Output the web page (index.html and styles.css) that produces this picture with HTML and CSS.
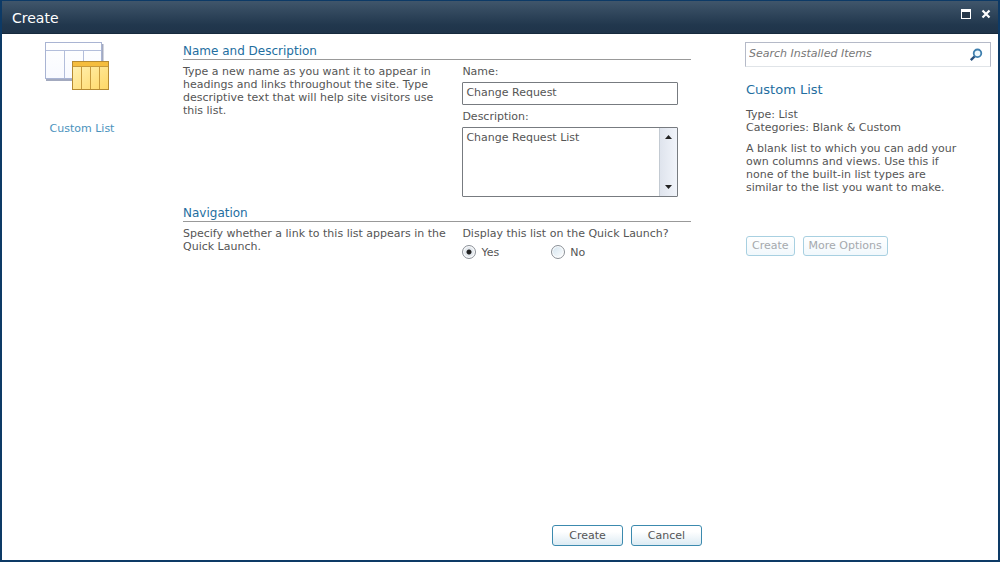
FILE: index.html
```html
<!DOCTYPE html>
<html lang="en">
<head>
<meta charset="utf-8">
<meta name="viewport" content="width=device-width, initial-scale=1">
<title>Create</title>
<link rel="stylesheet" href="styles.css">
</head>
<body>
<div class="dialog" role="dialog" aria-labelledby="dialog-title">
  <header class="titlebar">
    <h1 class="title" id="dialog-title">Create</h1>
    <button class="window-button" type="button" aria-label="Maximize">
      <svg width="12" height="12" viewBox="0 0 12 12"><rect x="1.5" y="1.5" width="9" height="9" fill="#26384a" stroke="#fff"/><rect x="1" y="1" width="10" height="3" fill="#fff"/></svg>
    </button>
    <button class="window-button" type="button" aria-label="Close">
      <svg width="12" height="12" viewBox="0 0 12 12"><path d="M2.5 2.5l7 7M9.5 2.5l-7 7" stroke="#fff" stroke-width="2.2"/></svg>
    </button>
  </header>

  <div class="content">
    <nav class="templates">
      <a class="template" href="#">
        <svg class="template-icon" width="66" height="50" viewBox="0 0 66 50">
          <defs>
            <linearGradient id="sheet" x1="0" y1="0" x2="0" y2="1"><stop offset="0" stop-color="#fff"/><stop offset="1" stop-color="#f8faff"/></linearGradient>
            <linearGradient id="gold" x1="0" y1="0" x2="1" y2="1"><stop offset="0" stop-color="#fff3b8"/><stop offset="1" stop-color="#ffd766"/></linearGradient>
          </defs>
          <path d="M2 38h56.500V2" fill="none" stroke="#a3aabf" stroke-width="2"/>
          <rect x="1.5" y="0.500" width="56" height="36" fill="url(#sheet)" stroke="#a9b4d3"/>
          <path d="M2 8.500h55M20.500 8.500V36M39.500 8.500V36" stroke="#b3bedb"/>
          <rect x="28.500" y="19.500" width="36" height="28" fill="url(#gold)" stroke="#b58a32"/>
          <rect x="29" y="20" width="35" height="4" fill="#f5bd3e"/>
          <path d="M29 24.500h35M37.500 25v22M46.500 25v22M55.500 25v22" stroke="#c79a3c"/>
        </svg>
        <span>Custom List</span>
      </a>
    </nav>

    <form class="form">
      <section class="section">
        <h2 class="section-title">Name and Description</h2>
        <div class="section-body">
          <p class="hint">Type a new name as you want it to appear in headings and links throughout the site. Type descriptive text that will help site visitors use this list.</p>
          <div class="fields">
            <label for="name">Name:</label>
            <input class="text-input" id="name" type="text" value="Change Request">
            <label for="description">Description:</label>
            <div class="memo">
              <textarea class="memo-text" id="description">Change Request List</textarea>
              <div class="memo-scroll">
                <button class="scroll-button" type="button" aria-label="Scroll up"><svg width="7" height="4" viewBox="0 0 7 4"><path d="M0 4L3.500 0 7 4z" fill="#222"/></svg></button>
                <button class="scroll-button" type="button" aria-label="Scroll down"><svg width="7" height="4" viewBox="0 0 7 4"><path d="M0 0h7L3.500 4z" fill="#222"/></svg></button>
              </div>
            </div>
          </div>
        </div>
      </section>

      <section class="section">
        <h2 class="section-title">Navigation</h2>
        <div class="section-body">
          <p class="hint">Specify whether a link to this list appears in the Quick Launch.</p>
          <fieldset class="choices">
            <legend>Display this list on the Quick Launch?</legend>
            <div class="options">
              <label class="option"><input class="radio" type="radio" name="quick-launch" checked>Yes</label>
              <label class="option"><input class="radio" type="radio" name="quick-launch">No</label>
            </div>
          </fieldset>
        </div>
      </section>

      <footer class="actions">
        <button class="button button-wide" type="submit">Create</button>
        <button class="button button-wide" type="button">Cancel</button>
      </footer>
    </form>

    <aside class="details">
      <div class="search">
        <input class="search-input" type="text" placeholder="Search Installed Items" aria-label="Search Installed Items">
        <button class="search-button" type="button" aria-label="Search">
          <svg width="14" height="14" viewBox="0 0 14 14"><path d="M6 8L1.800 12.200" stroke="#264f7d" stroke-width="2.400"/><circle cx="8.500" cy="5.300" r="3.800" fill="#eef8fd" stroke="#3f7fae" stroke-width="1.800"/></svg>
        </button>
      </div>
      <div class="summary">
        <h2 class="summary-title">Custom List</h2>
        <p>Type: List<br>Categories: Blank &amp; Custom</p>
        <p class="summary-text">A blank list to which you can add your own columns and views. Use this if none of the built-in list types are similar to the list you want to make.</p>
        <div class="summary-actions">
          <button class="button" type="button" disabled>Create</button>
          <button class="button" type="button" disabled>More Options</button>
        </div>
      </div>
    </aside>
  </div>
</div>
</body>
</html>
```
FILE: styles.css
```css
* {
  box-sizing: border-box;
}

body {
  margin: 0;
  font: 11px/13px Verdana, "DejaVu Sans", sans-serif;
  color: #555;
}

h1, h2, p, fieldset, legend {
  margin: 0;
  padding: 0;
  border: 0;
  font-weight: normal;
}

button, input, textarea {
  margin: 0;
  font: inherit;
  color: inherit;
}

.dialog {
  display: flex;
  flex-direction: column;
  min-height: 100vh;
  border: 2px solid #0d3a66;
  border-top-width: 1px;
  background: #fff;
}

.titlebar {
  display: flex;
  align-items: center;
  gap: 8px;
  height: 33px;
  padding: 0 6px 0 10px;
  border-bottom: 1px solid #162a3d;
  background: linear-gradient(#40566b, #21374d 75%, #1f344a);
}

.title {
  flex: 1;
  padding-top: 1px;
  font-size: 14px;
  line-height: 16px;
  color: #fff;
}

.window-button {
  display: flex;
  margin-bottom: 6px;
  padding: 0;
  border: 0;
  background: none;
}

.content {
  flex: 1;
  display: flex;
  padding: 8px 7px 14px 0;
}

.templates {
  flex: none;
  width: 160px;
  margin-right: 21px;
}

.template {
  display: flex;
  flex-direction: column;
  align-items: center;
  gap: 30px;
  color: #4b93bd;
  text-decoration: none;
}

.template-icon {
  margin-right: 10px;
}

.form {
  flex: 1;
  display: flex;
  flex-direction: column;
  min-width: 0;
  margin-right: 43px;
}

.section {
  margin: 0 11px 7px 0;
}

.section-title {
  padding-top: 2px;
  border-bottom: 1px solid #999;
  font-size: 12px;
  line-height: 15px;
  color: #236e9f;
}

.section-body {
  display: grid;
  grid-template-columns: 11fr 9fr;
  padding-top: 5px;
}

.hint {
  padding-right: 12px;
}

.fields {
  display: flex;
  flex-direction: column;
  padding-right: 13px;
}

.text-input {
  height: 23px;
  margin: 4px 0 5px;
  padding: 0 3px 2px;
  border: 1px solid #777b80;
  border-radius: 1px;
  background: #fff;
}

.memo {
  display: flex;
  height: 70px;
  margin-top: 4px;
  border: 1px solid #777b80;
  border-radius: 1px;
}

.memo-text {
  flex: 1;
  min-width: 0;
  padding: 3px;
  border: 0;
  background: none;
  resize: none;
  overflow: hidden;
}

.memo-scroll {
  display: flex;
  flex-direction: column;
  justify-content: space-between;
  width: 18px;
  border-left: 1px solid #c3cad2;
  background: linear-gradient(90deg, #dfe4ed, #f1f4fa);
}

.scroll-button {
  display: flex;
  align-items: center;
  justify-content: center;
  height: 18px;
  padding: 0;
  border: 0;
  background: none;
}

.choices {
  min-width: 0;
}

.options {
  display: flex;
  gap: 52px;
  padding-top: 5px;
}

.option {
  display: flex;
  align-items: center;
  gap: 5px;
}

.radio {
  appearance: none;
  width: 14px;
  height: 14px;
  border: 1px solid #8b9097;
  border-radius: 50%;
  background: linear-gradient(135deg, #d2e3ee, #fff);
  box-shadow: inset 0 0 0 1px #fff;
}

.radio:checked {
  background: radial-gradient(circle, #222 2px, #e4e9ee 3px);
}

.actions {
  display: flex;
  justify-content: flex-end;
  gap: 8px;
  margin-top: auto;
}

.button {
  height: 20px;
  padding: 0 5px 1px;
  border: 1px solid #3c8aae;
  border-radius: 3px;
  background: linear-gradient(#fff 30%, #dcebf3);
}

.button-wide {
  width: 71px;
  height: 21px;
}

.button:disabled {
  border-color: #a8d0e1;
  background: linear-gradient(#fff, #f1f8fc);
  color: #a5a9ad;
}

.details {
  flex: none;
  width: 246px;
}

.search {
  display: flex;
  height: 25px;
  border: 1px solid #b5bac8;
  border-bottom-color: #e0e4e8;
}

.search-input {
  flex: 1;
  min-width: 0;
  padding: 0 3px 2px;
  border: 0;
  background: none;
}

.search-input::placeholder {
  font-style: italic;
  color: #777;
  opacity: 1;
}

.search-button {
  display: flex;
  align-items: center;
  padding: 0 7px;
  border: 0;
  background: none;
}

.summary {
  padding: 15px 29px 0 1px;
}

.summary-title {
  margin-bottom: 10px;
  font-size: 13px;
  line-height: 16px;
  color: #236e9f;
}

.summary-text {
  margin-top: 8px;
}

.summary-actions {
  display: flex;
  gap: 8px;
  margin-top: 42px;
}
```
